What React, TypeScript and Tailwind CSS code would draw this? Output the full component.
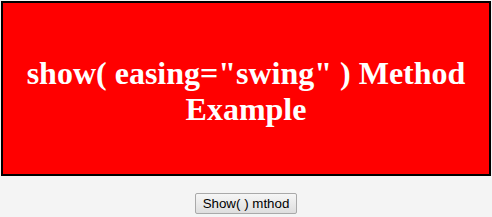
export default function App() {
  return (
    <div className="min-h-[217px] bg-[#f4f4f4] pt-px">
      <div className="mx-px flex h-[175px] items-center justify-center border-2 border-black bg-[#ff0000] px-4 pt-1">
        <h1 className="text-center font-['Liberation_Serif',serif] text-[32px] font-bold leading-[36px] text-white">
          show( easing="swing" ) Method Example
        </h1>
      </div>
      <div className="mt-[17px] flex justify-center">
        <button className="h-[21px] rounded-[2px] border border-[#a9a9a9] bg-gradient-to-b from-[#f6f6f6] to-[#dedede] px-[7px] font-['Liberation_Sans',Arial,sans-serif] text-[13.33px] leading-none text-black">
          Show( ) mthod
        </button>
      </div>
    </div>
  );
}
